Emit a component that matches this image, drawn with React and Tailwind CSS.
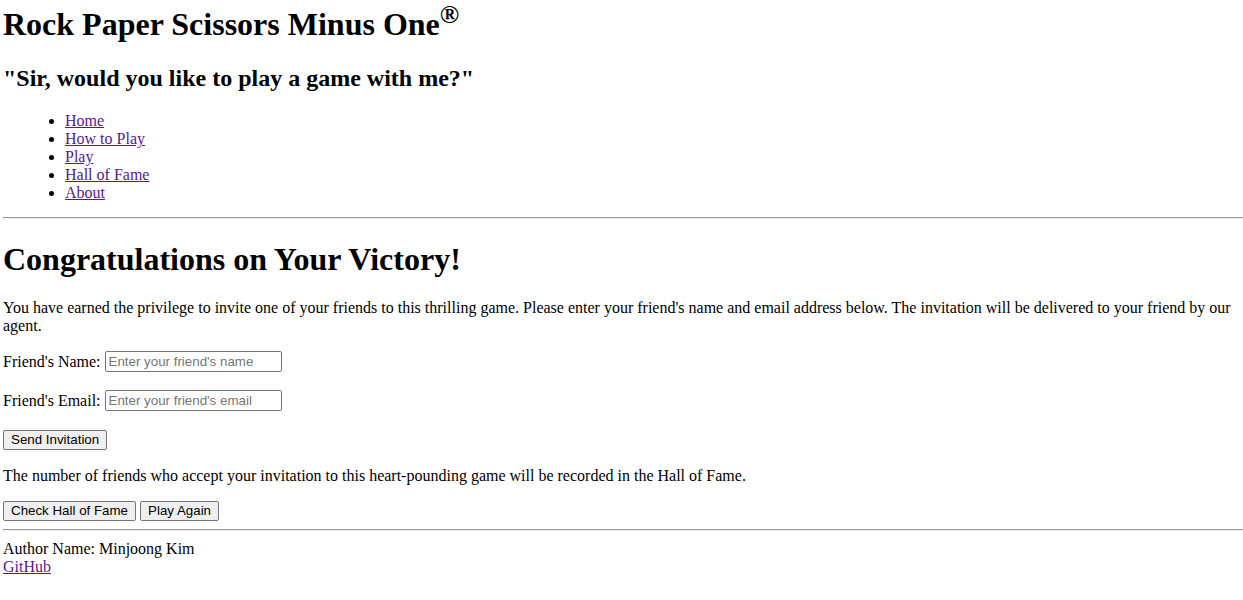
import React, { useState } from 'react';

const navLinks = ['Home', 'How to Play', 'Play', 'Hall of Fame', 'About'];

export default function App() {
    const [name, setName] = useState('');
    const [email, setEmail] = useState('');

    const inputCls = "w-[177px] h-[21px] border border-[#767676] rounded-[2px] px-[3px] text-[13.33px] font-['Liberation_Sans',Arial,sans-serif] text-black placeholder:text-[#757575] outline-none align-middle";
    const btnCls = "h-[20px] px-[7px] border border-[#767676] rounded-[2px] bg-[#efefef] text-[13.33px] leading-none font-['Liberation_Sans',Arial,sans-serif] text-black";

    return (
        <div className="bg-white text-black font-['Liberation_Serif','Times_New_Roman',serif] text-[16px] leading-[18px] pl-[3px] pb-4">
            <header>
                <h1 className="text-[32px] leading-[37px] font-bold pt-[4px]">
                    Rock Paper Scissors Minus One<sup className="text-[26px] leading-none align-[10px] relative top-[-2px]">®</sup>
                </h1>
                <h2 className="text-[24px] leading-[28px] font-bold mt-[21px]">"Sir, would you like to play a game with me?"</h2>
                <nav>
                    <ul className="list-disc pl-[62px] mt-[20px]">
                        {navLinks.map(l => (
                            <li key={l}><a href="#" className="underline text-[#551a8b]">{l}</a></li>
                        ))}
                    </ul>
                </nav>
            </header>
            <hr className="mt-[15px] border-0 border-t border-t-[#9a9a9a] border-b border-b-[#eeeeee]" />

            <main>
                <h1 className="text-[32px] leading-[37px] font-bold mt-[22px]">Congratulations on Your Victory!</h1>
                <p className="mt-[21px] pr-2">You have earned the privilege to invite one of your friends to this thrilling game. Please enter your friend's name and email address below. The invitation will be delivered to your friend by our agent.</p>
                <form onSubmit={e => e.preventDefault()}>
                    <div className="mt-[16px] flex items-center gap-[4px] h-[21px]">
                        <label htmlFor="fname">Friend's Name:</label>
                        <input id="fname" className={inputCls} placeholder="Enter your friend's name" value={name} onChange={e => setName(e.target.value)} />
                    </div>
                    <div className="mt-[18px] flex items-center gap-[4px] h-[21px]">
                        <label htmlFor="femail">Friend's Email:</label>
                        <input id="femail" type="email" className={inputCls} placeholder="Enter your friend's email" value={email} onChange={e => setEmail(e.target.value)} />
                    </div>
                    <div className="mt-[19px]">
                        <button type="submit" className={btnCls}>Send Invitation</button>
                    </div>
                </form>
                <p className="mt-[17px]">The number of friends who accept your invitation to this heart-pounding game will be recorded in the Hall of Fame.</p>
                <div className="mt-[16px] flex gap-[4px]">
                    <button className={btnCls}>Check Hall of Fame</button>
                    <button className={btnCls}>Play Again</button>
                </div>
            </main>

            <hr className="mt-[8px] border-0 border-t border-t-[#9a9a9a] border-b border-b-[#eeeeee]" />
            <footer className="mt-[9px]">
                <p>Author Name: Minjoong Kim</p>
                <a href="#" className="underline text-[#551a8b]">GitHub</a>
            </footer>
        </div>
    );
}
